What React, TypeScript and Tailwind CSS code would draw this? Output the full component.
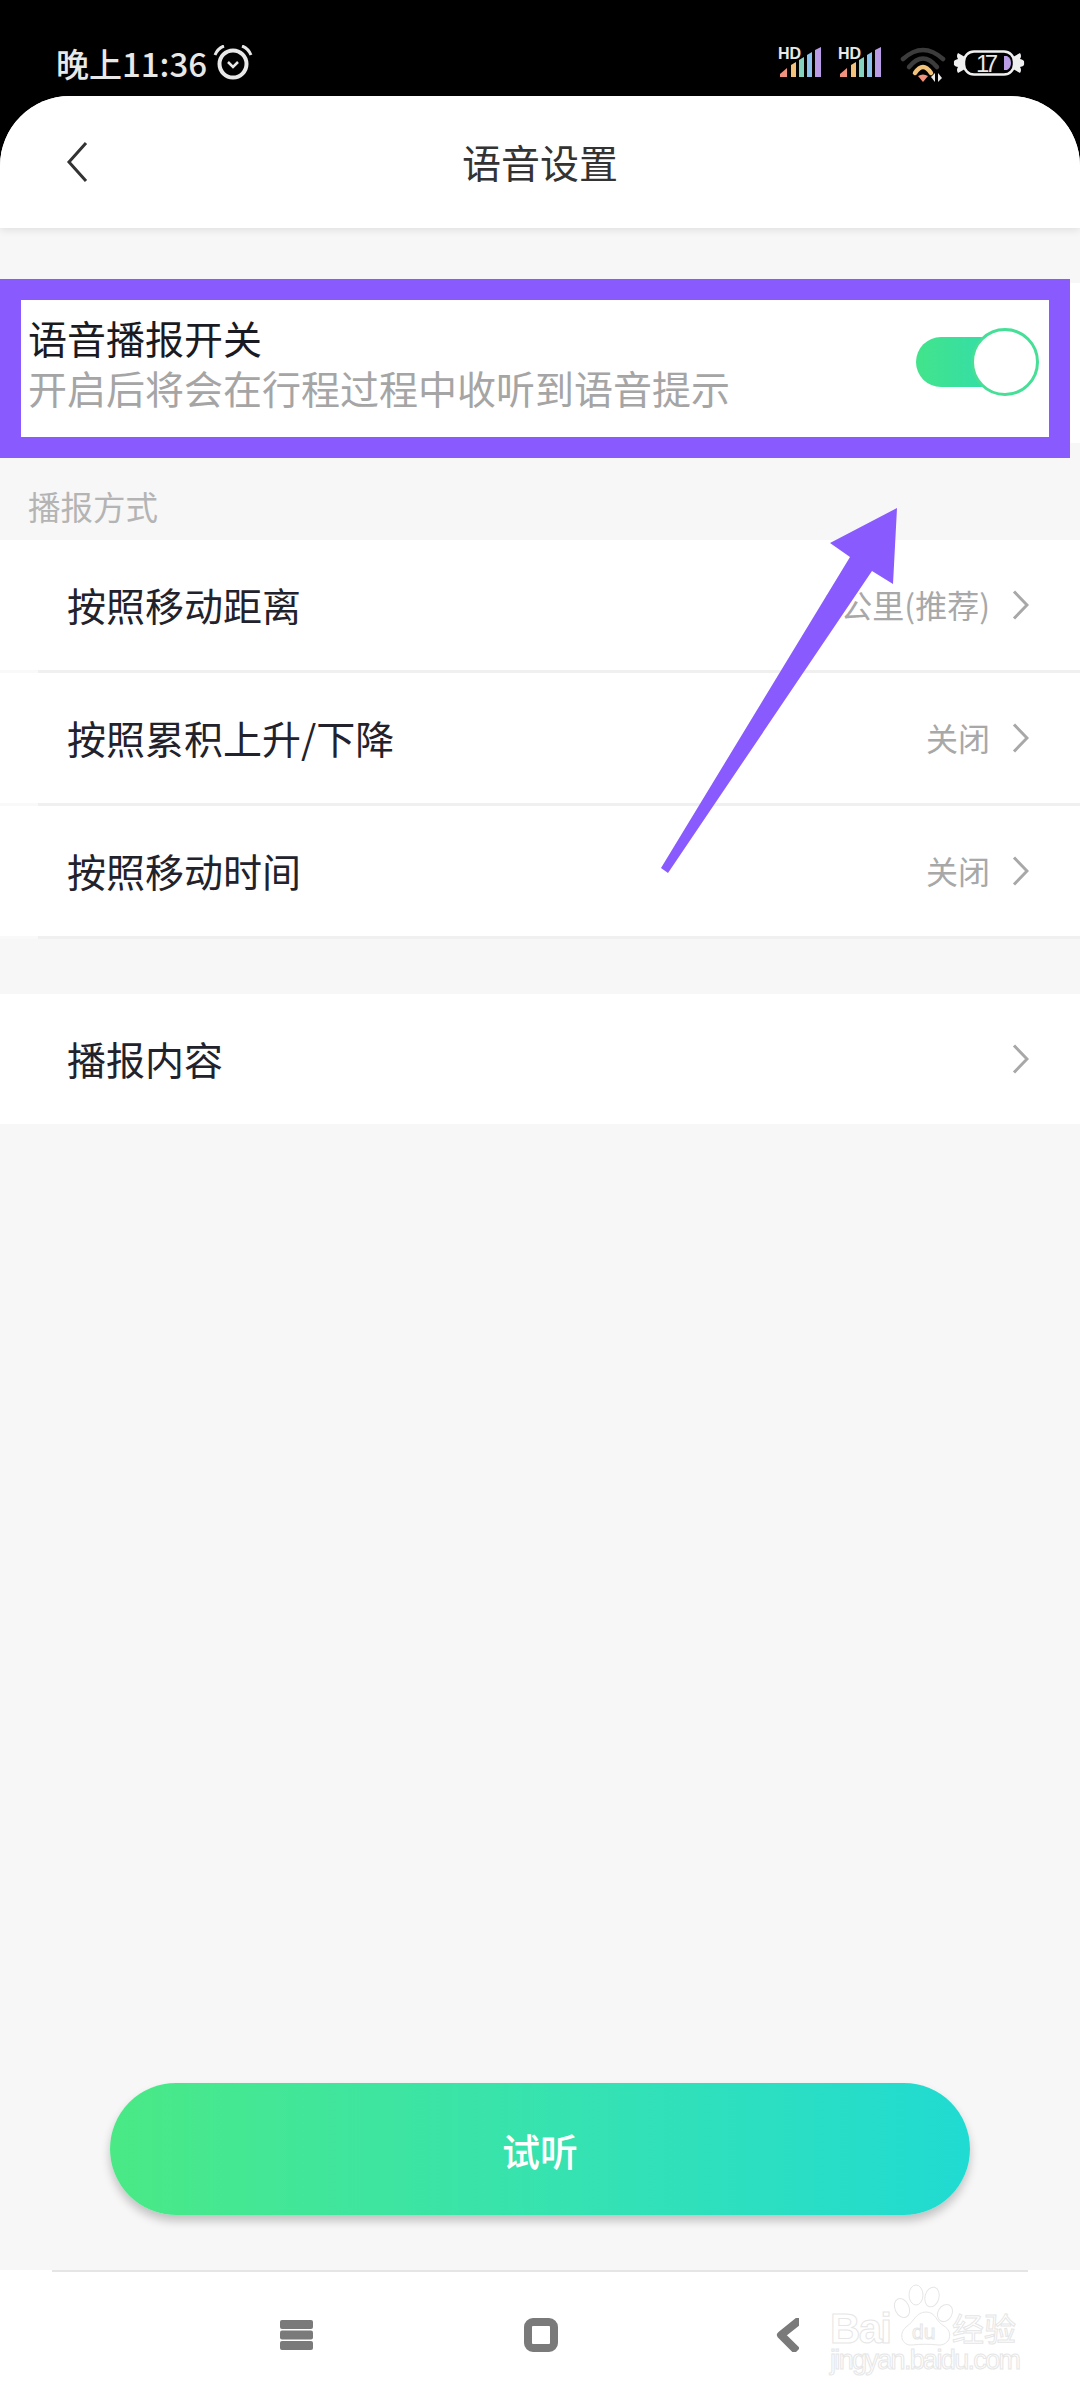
const font = "font-['Noto_Sans_CJK_SC','Noto_Sans',sans-serif]";

function SignalIcon() {
  return (
    <svg width="44" height="35" viewBox="0 -4 44 35">
      <text x="0" y="12" fontSize="16" fontWeight="700" fill="#e8e8e8" fontFamily="Liberation Sans, sans-serif" textLength="23">
        HD
      </text>
      <path d="M2 30 L2 27 L9 21 L9 30 Z" fill="#f2917d" />
      <path d="M13 30 L13 18 L18 15 L18 30 Z" fill="#f4c27a" />
      <path d="M21 30 L21 13 L26 10 L26 30 Z" fill="#86d3c0" />
      <path d="M29 30 L29 8 L34 5 L34 30 Z" fill="#8cc3ec" />
      <path d="M37 30 L37 3 L43 0 L43 30 Z" fill="#b99be6" />
    </svg>
  );
}

function WifiIcon() {
  return (
    <svg width="46" height="36" viewBox="0 0 46 36" fill="none">
      <path d="M3 12 Q23 -6 43 12" stroke="#3c3c3c" strokeWidth="4.5" strokeLinecap="round" />
      <path d="M9 20 Q23 3 37 20" stroke="#3c3c3c" strokeWidth="4.5" strokeLinecap="round" />
      <path d="M15 26 Q23 14 31 26" stroke="#f2c27a" strokeWidth="4.5" strokeLinecap="round" />
      <path d="M18 29 Q23 26 28 29 L23 35 Z" fill="#f2917d" />
      <path d="M35 26 L35 35 L31 30 Z" fill="#e8e8e8" />
      <path d="M38 35 L38 26 L42 31 Z" fill="#e8e8e8" />
    </svg>
  );
}

function BatteryIcon() {
  return (
    <svg width="72" height="28" viewBox="0 -1 72 28" fill="none">
      <path d="M12 7 L5 3 Q3 6 5 9 Q0 10 1 13 Q0 16 5 17 Q3 20 5 23 L12 19 Z" fill="#f0f0f0" />
      <path d="M60 7 L67 3 Q69 6 67 9 Q72 10 71 13 Q72 16 67 17 Q69 20 67 23 L60 19 Z" fill="#f0f0f0" />
      <rect x="11" y="1.5" width="50" height="23" rx="10" fill="#000" stroke="#f0f0f0" strokeWidth="2.5" />
      <text x="23" y="22" fontSize="24" fill="#e8e8e8" fontFamily="Liberation Sans, sans-serif" textLength="22">
        17
      </text>
      <path d="M51 6 H54 Q58 8 58 13 Q58 18 54 20 H51 Z" fill="#b99be6" />
    </svg>
  );
}

function AlarmIcon() {
  return (
    <svg width="40" height="36" viewBox="0 0 40 36" fill="none" stroke="#e8e8e8">
      <circle cx="20" cy="19" r="13.5" strokeWidth="4" />
      <path d="M15 17 L20 22 L25 17" strokeWidth="2.5" />
      <path d="M2 10 Q5 3 11 1" strokeWidth="3" />
      <path d="M38 10 Q35 3 29 1" strokeWidth="3" />
    </svg>
  );
}

function ChevronRight() {
  return (
    <svg width="17" height="30" viewBox="0 0 17 30" fill="none" className="shrink-0">
      <path d="M2 1.5 L15 15 L2 28.5" stroke="#a8a8a8" strokeWidth="3" />
    </svg>
  );
}

function Row({ label, value }: { label: string; value?: string }) {
  return (
    <div className="h-[130px] bg-white flex items-center justify-between pl-[67px] pr-[51px]">
      <span className="text-[39px] leading-[50px] text-[#22222c] mt-[-2px]">{label}</span>
      <div className="flex items-center gap-[22px]">
        {value && <span className="text-[32px] leading-[40px] text-[#a8a8a8] mt-[-3px]">{value}</span>}
        <ChevronRight />
      </div>
    </div>
  );
}

function Divider() {
  return (
    <div className="h-[3px] bg-[#f9f9f9] pl-[38px]">
      <div className="h-full bg-[#f0f0f0]" />
    </div>
  );
}

function Watermark() {
  return (
    <svg
      width="240"
      height="120"
      viewBox="0 0 240 120"
      className="absolute left-[810px] top-[2270px]"
      fill="#fff"
      stroke="#e6e6e6"
      strokeWidth="1"
    >
      <text x="20" y="73" fontSize="42" fontWeight="700" fontFamily="Liberation Sans, sans-serif" textLength="62">
        Bai
      </text>
      <ellipse cx="92" cy="38" rx="7" ry="10" transform="rotate(-25 92 38)" />
      <ellipse cx="106" cy="25" rx="7" ry="10" />
      <ellipse cx="122" cy="27" rx="7" ry="10" transform="rotate(15 122 27)" />
      <ellipse cx="135" cy="43" rx="7" ry="9" transform="rotate(30 135 43)" />
      <path d="M116 42 C126 42 126 52 134 56 C144 62 140 76 128 75 C120 74 110 74 102 75 C92 76 88 64 96 57 C104 52 106 42 116 42 Z" />
      <text x="102" y="69" fontSize="21" fontFamily="Liberation Sans, sans-serif">
        du
      </text>
      <text x="142" y="71" fontSize="32" fontFamily="Noto Sans CJK SC, sans-serif">
        经验
      </text>
      <text x="20" y="99" fontSize="27" fontFamily="Liberation Sans, sans-serif" textLength="191">
        jingyan.baidu.com
      </text>
    </svg>
  );
}

export default function App() {
  return (
    <div className={`relative w-[1080px] h-[2400px] flex flex-col bg-black overflow-hidden ${font}`}>
      {/* status bar */}
      <div className="h-[96px] shrink-0 flex items-start justify-between pl-[56px] pr-[55px] pt-[45px]">
        <div className="flex items-center gap-[6px] h-[36px]">
          <span className="text-[33px] leading-[36px] text-[#e8e8e8] font-medium">晚上11:36</span>
          <AlarmIcon />
        </div>
        <div className="flex items-start">
          <div className="mt-[-2px]">
            <SignalIcon />
          </div>
          <div className="mt-[-2px] ml-[16px]">
            <SignalIcon />
          </div>
          <div className="mt-[2px] ml-[18px]">
            <WifiIcon />
          </div>
          <div className="mt-[4px] ml-[7px]">
            <BatteryIcon />
          </div>
        </div>
      </div>

      <div className="flex-1 flex flex-col bg-[#f7f7f7] rounded-t-[70px] overflow-hidden">
        {/* header */}
        <div className="relative h-[132px] shrink-0 bg-white flex items-center justify-center shadow-[0_2px_8px_rgba(0,0,0,0.1)]">
          <svg width="22" height="40" viewBox="0 0 22 40" fill="none" className="absolute left-[66px] top-[46px]">
            <path d="M20 1 L3 20 L20 39" stroke="#333" strokeWidth="3" />
          </svg>
          <span className="text-[39px] leading-[50px] text-[#333] mt-[-2px]">语音设置</span>
        </div>

        {/* voice switch */}
        <div className="mt-[55px] h-[160px] shrink-0 bg-white flex justify-between pl-[28px] pr-[41px]">
          <div className="pt-[29px]">
            <div className="text-[39px] leading-[50px] text-[#1a1a22]">语音播报开关</div>
            <div className="text-[39px] leading-[50px] text-[#a5a5a5]">开启后将会在行程过程中收听到语音提示</div>
          </div>
          <div className="relative w-[123px] h-[69px] mt-[45px]">
            <div className="absolute left-0 top-[9px] w-[90px] h-[50px] rounded-full bg-gradient-to-r from-[#42e48a] to-[#30dcae]" />
            <div className="absolute right-0 top-0 size-[68px] rounded-full bg-white border-[3px] border-[#47df97]" />
          </div>
        </div>

        <div className="h-[97px] shrink-0 flex items-center pl-[28px] pt-[29px]">
          <span className="text-[32.5px] leading-[40px] text-[#b4b4b4]">播报方式</span>
        </div>

        <Row label="按照移动距离" value="1公里(推荐)" />
        <Divider />
        <Row label="按照累积上升/下降" value="关闭" />
        <Divider />
        <Row label="按照移动时间" value="关闭" />
        <Divider />

        <div className="mt-[55px]">
          <Row label="播报内容" />
        </div>

        <div className="flex-1" />

        <button className="self-center w-[860px] h-[132px] shrink-0 rounded-full bg-gradient-to-r from-[#4ae985] to-[#20dbd2] text-white text-[38px] font-medium shadow-[0_6px_10px_rgba(0,0,0,0.22)]">
          试听
        </button>

        {/* nav bar */}
        <div className="mt-[55px] h-[130px] shrink-0 bg-white">
          <div className="mx-[52px] h-[2px] bg-[#e5e5e5]" />
          <div className="flex items-center pl-[280px] pt-[46px]">
            <svg width="33" height="30" viewBox="0 0 33 30" fill="#7a7a7a">
              <rect x="0" y="0" width="33" height="9" rx="2" />
              <rect x="0" y="10.5" width="33" height="9" rx="2" />
              <rect x="0" y="21" width="33" height="9" rx="2" />
            </svg>
            <svg width="34" height="34" viewBox="0 0 34 34" fill="none" className="ml-[211px]">
              <rect x="4" y="4" width="26" height="26" rx="5" stroke="#7a7a7a" strokeWidth="8" />
            </svg>
            <svg width="23" height="34" viewBox="0 0 23 34" fill="none" className="ml-[218px]">
              <path d="M25 1 L5 17 L21 33" stroke="#7a7a7a" strokeWidth="8" strokeLinejoin="round" />
            </svg>
          </div>
        </div>
      </div>

      {/* annotation drawn over the screenshot */}
      <div className="absolute left-0 top-[279px] w-[1070px] h-[179px] border-[21px] border-[#895bff]" />
      <svg width="260" height="380" viewBox="0 0 260 380" className="absolute left-[650px] top-[500px]">
        <polygon points="247,8 243,84 222,71 18,373 11,368 200,57 180,43" fill="#895bff" />
      </svg>
      <Watermark />
    </div>
  );
}
